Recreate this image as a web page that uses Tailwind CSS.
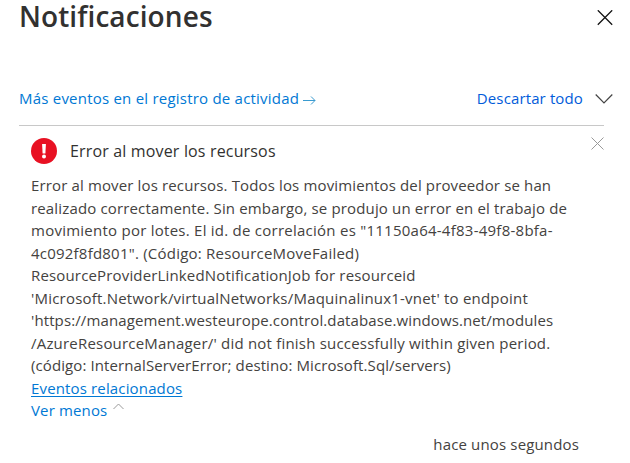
<!DOCTYPE html>
<html lang="es"><head><meta charset="utf-8"><title>Notificaciones</title>
<script src="https://cdn.jsdelivr.net/npm/@tailwindcss/browser@4"></script></head>
<body class="bg-white">
<main class="w-[630px] h-[463px] bg-white text-[#444240] font-['Open_Sans',sans-serif] text-[15px] leading-[22.5px]">
<header class="flex justify-between pl-[19px] pr-[17px] h-[87px]">
<h1 class="text-[28px] leading-[32px] font-semibold whitespace-nowrap tracking-[0.09px] text-[#323130]"><span>Notificaciones</span></h1>
<svg class="w-4 h-4 mt-[10px]" viewBox="0 0 16 16" fill="none" stroke="#111" stroke-width="1.3"><path d="M.8.3 15.2 14.7M15.2.3.8 14.7"/></svg>
</header>
<nav class="flex items-center h-[22px] pl-[19px] pr-[17px] whitespace-nowrap">
<a class="text-[#0078d4] tracking-[0.22px]"><span>Más eventos en el registro de actividad</span></a>
<svg class="w-[13px] h-3 ml-1 mt-1" viewBox="0 0 13 12" fill="none" stroke="#3a9bd0"><path d="M0 6.5H12M8 2.5l4 4-4 4"/></svg>
<a class="ml-auto text-[#015cda] tracking-[0.13px]"><span>Descartar todo</span></a>
<svg class="w-[18px] h-[10px] ml-3 mt-0.5" viewBox="0 0 18 10" fill="none" stroke="#444" stroke-width="1.2"><path d="M.7.5 9 8.8 17.3.5"/></svg>
</nav>
<section class="mt-4 ml-[19px] mr-[26px] border-t border-[#c8c8c8] pl-3">
<div class="flex items-start h-[48px] whitespace-nowrap">
<svg class="w-[26px] h-[26px] mt-3" viewBox="0 0 26 26"><circle cx="13" cy="13" r="13" fill="#e81123"/><path d="M11.1 6h3.8l-.5 9.5h-2.8z" fill="#fff"/><circle cx="13" cy="18.5" r="2" fill="#fff"/></svg>
<h2 class="ml-[13px] mt-[14px] text-[16px] tracking-[0.16px] text-[#323130]"><span>Error al mover los recursos</span></h2>
<svg class="w-[13px] h-[13px] ml-auto mt-[11px]" viewBox="0 0 13 13" fill="none" stroke="#999"><path d="M.5.5l12 12M12.5.5l-12 12"/></svg>
</div>
<p class="whitespace-nowrap"><span class="tracking-[0.14px]">Error al mover los recursos. Todos los movimientos del proveedor se han</span><br><span class="tracking-[0.15px]">realizado correctamente. Sin embargo, se produjo un error en el trabajo de</span><br><span class="tracking-[0.25px]">movimiento por lotes. El id. de correlación es "11150a64-4f83-49f8-8bfa-</span><br><span class="tracking-[0.22px]">4c092f8fd801". (Código: ResourceMoveFailed)</span><br><span class="tracking-[0.16px]">ResourceProviderLinkedNotificationJob for resourceid</span><br><span class="tracking-[0.21px]">'Microsoft.Network/virtualNetworks/Maquinalinux1-vnet' to endpoint</span><br><span class="tracking-[0.11px]">'https://management.westeurope.control.database.windows.net/modules</span><br><span class="tracking-[0.2px]">/AzureResourceManager/' did not finish successfully within given period.</span><br><span class="tracking-[0.1px]">(código: InternalServerError; destino: Microsoft.Sql/servers)</span></p>
<a class="block w-fit text-[#0078d4] underline underline-offset-2 tracking-[0.15px] whitespace-nowrap"><span>Eventos relacionados</span></a>
<div class="flex items-start text-[#0078d4] tracking-[0.15px]"><a><span>Ver menos</span></a><svg class="w-[11px] h-[7px] ml-[6px] mt-[4px]" viewBox="0 0 11 7" fill="none" stroke="#999"><path d="M.5 6l5-5 5 5"/></svg></div>
<footer class="flex justify-end mt-[11px] pr-[25px] tracking-[0.15px]"><span>hace unos segundos</span></footer>
</section></main></body></html>
